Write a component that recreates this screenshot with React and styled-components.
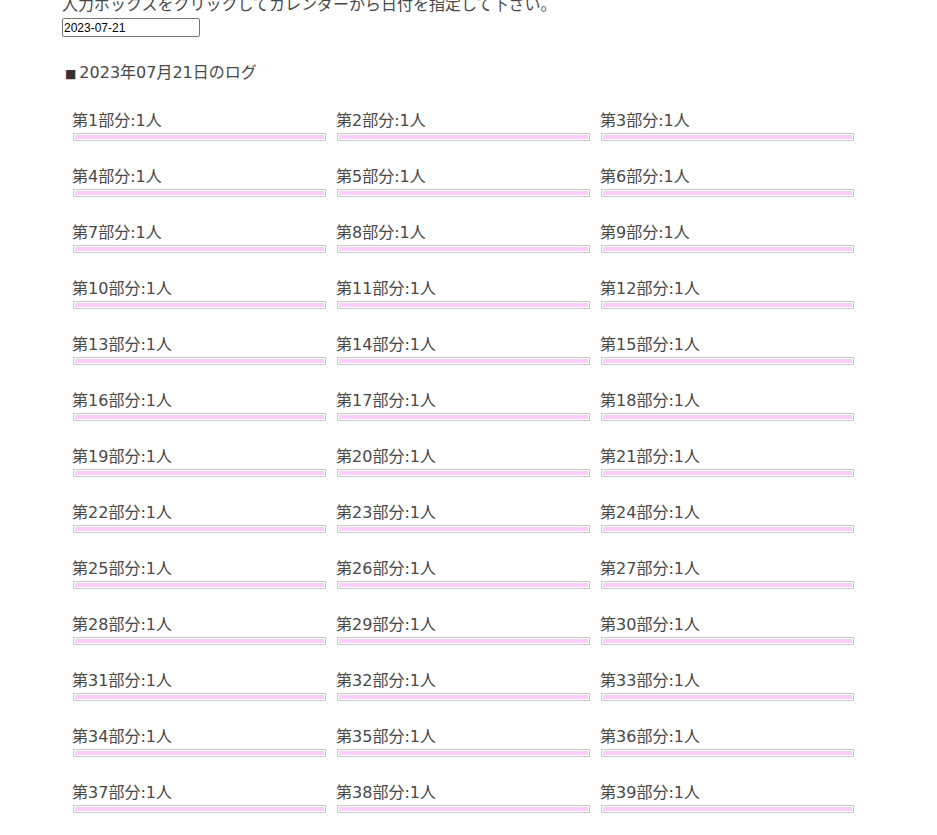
import React from "react";
import styled, { createGlobalStyle } from "styled-components";

const GlobalStyle = createGlobalStyle`
  body {
    margin: 0;
    background: #fff;
    color: #484848;
    font-family: "DejaVu Sans", "Noto Sans CJK JP", sans-serif;
    font-size: 16px;
  }
`;

const Page = styled.main`
  padding: 0 0 40px 62px;
`;

const Lead = styled.p`
  margin: -7px 0 0;
  line-height: 24px;
`;

const DateInput = styled.input`
  display: block;
  box-sizing: border-box;
  width: 138px;
  height: 19px;
  margin: 1px 0 0;
  padding: 0 1px;
  border: 1px solid #767676;
  border-radius: 2px;
  font-family: "Liberation Sans", Arial, sans-serif;
  font-size: 12px;
  color: #000;
`;

const Heading = styled.h2`
  margin: 24px 0 0;
  padding-left: 3px;
  font-size: 16px;
  font-weight: normal;
  line-height: 24px;
`;

const Marker = styled.span`
  font-size: 12px;
  margin-right: 3px;
  color: #333;
`;

const Grid = styled.div`
  display: grid;
  grid-template-columns: repeat(3, 254px);
  column-gap: 10px;
  row-gap: 23px;
  margin: 23px 0 0 10px;
`;

const Cell = styled.div`
  display: flex;
  flex-direction: column;
`;

const Label = styled.span`
  line-height: 24px;
  white-space: nowrap;
`;

const Bar = styled.div`
  box-sizing: border-box;
  height: 8px;
  margin: 0 0 1px 1px;
  padding: 1px;
  border: 1px solid #c8c8c8;
  background: #fff;
`;

const Fill = styled.div`
  height: 100%;
  background: #f9cff8;
`;

const logs = Array.from({ length: 39 }, (_, i) => ({ part: i + 1, count: 1 }));
const max = Math.max(...logs.map((l) => l.count));

export default function App() {
  return (
    <>
      <GlobalStyle />
      <Page>
        <Lead>入力ボックスをクリックしてカレンダーから日付を指定して下さい。</Lead>
        <DateInput type="text" defaultValue="2023-07-21" />
        <Heading>
          <Marker>■</Marker>2023年07月21日のログ
        </Heading>
        <Grid>
          {logs.map((l) => (
            <Cell key={l.part}>
              <Label>
                第{l.part}部分:{l.count}人
              </Label>
              <Bar>
                <Fill style={{ width: `${(l.count / max) * 100}%` }} />
              </Bar>
            </Cell>
          ))}
        </Grid>
      </Page>
    </>
  );
}
